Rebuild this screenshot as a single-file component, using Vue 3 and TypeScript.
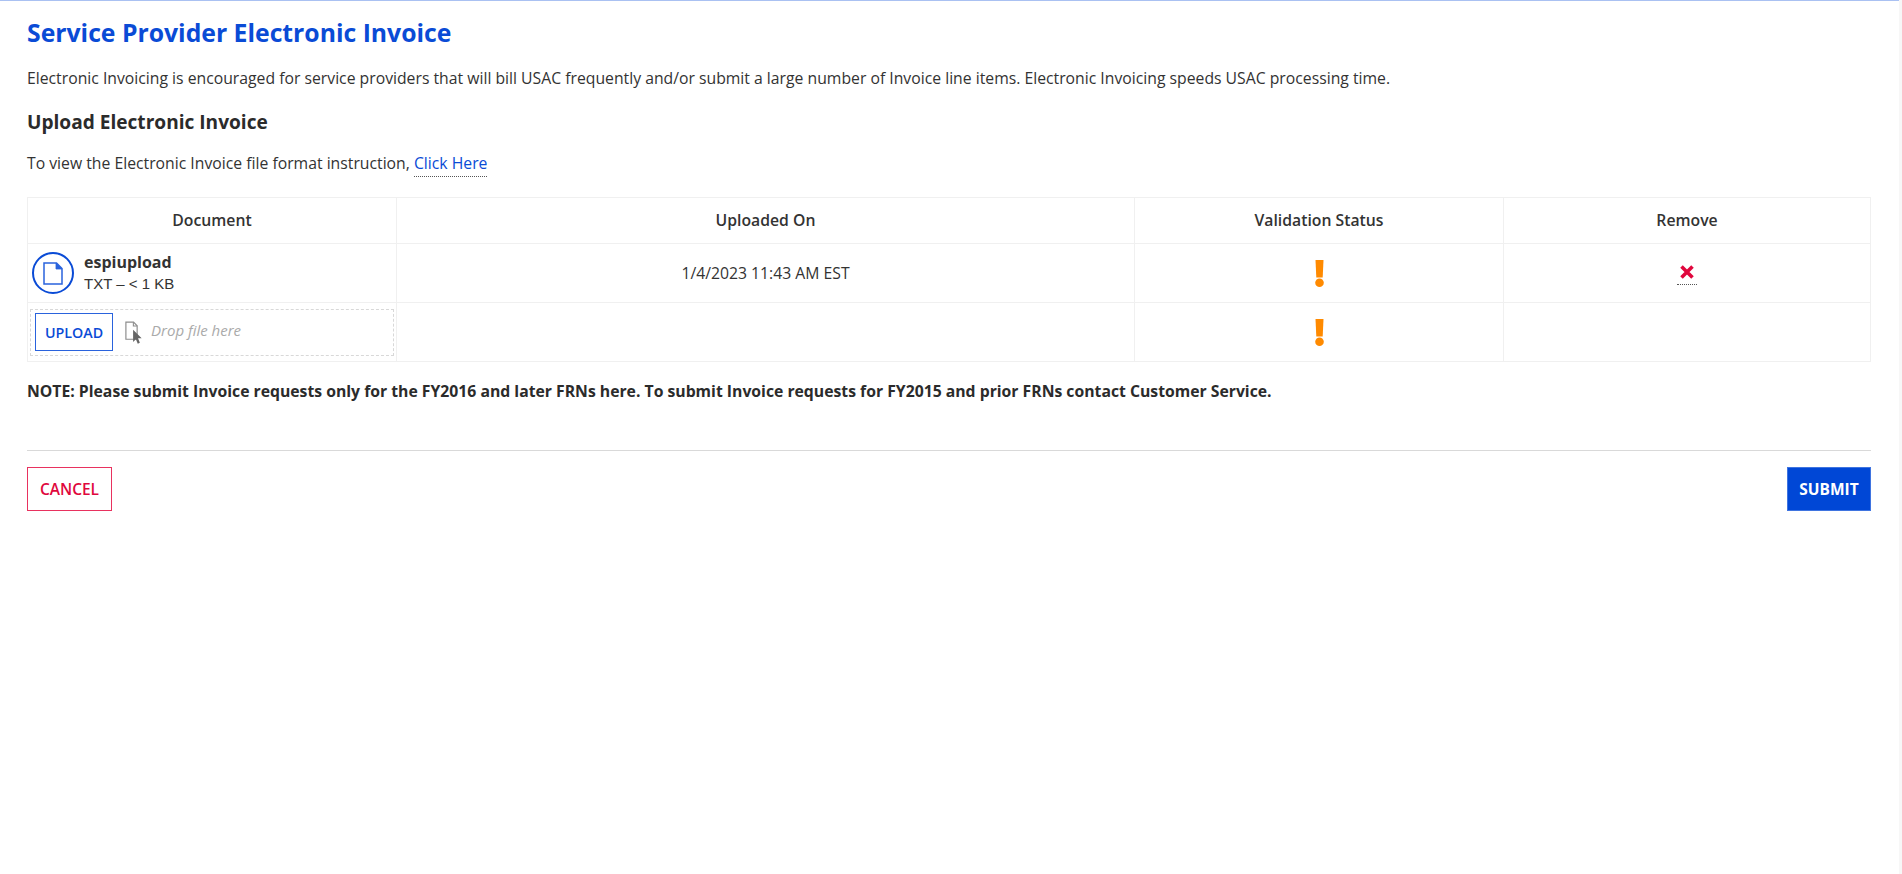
<template>
  <div class="page">
    <main class="content">
      <h1>Service Provider Electronic Invoice</h1>
      <p class="intro">
        Electronic Invoicing is encouraged for service providers that will bill USAC frequently and/or submit a large number of Invoice line items. Electronic Invoicing speeds USAC processing time.
      </p>
      <h2>Upload Electronic Invoice</h2>
      <p class="format">
        To view the Electronic Invoice file format instruction,
        <a class="dotted" href="#">Click Here</a>
      </p>

      <table class="docs">
        <thead>
          <tr>
            <th v-for="col in columns" :key="col">{{ col }}</th>
          </tr>
        </thead>
        <tbody>
          <tr class="row-file">
            <td>
              <div class="file">
                <span class="file-icon">
                  <svg width="20" height="23" viewBox="0 0 20 23" fill="none" stroke="#2a63dd" stroke-width="1.500">
                    <path d="M1 1h12.500L19 6.500V22H1z" />
                    <path d="M13 1l6 6h-6z" fill="#2a63dd" stroke-width="0.800" />
                  </svg>
                </span>
                <div class="file-info">
                  <strong>espiupload</strong>
                  <span>TXT – &lt; 1 KB</span>
                </div>
              </div>
            </td>
            <td class="center">1/4/2023 11:43 AM EST</td>
            <td class="center">
              <svg class="warn" width="9" height="27" viewBox="0 0 9 27" fill="#ff8a00">
                <path d="M.5 0h8l-.8 17.500H1.300z" />
                <circle cx="4.500" cy="22.700" r="4.300" />
              </svg>
            </td>
            <td class="center">
              <a class="remove" href="#" aria-label="Remove">
                <svg width="14" height="14" viewBox="0 0 14 14" stroke="#e0073d" stroke-width="3.600">
                  <path d="M1.500 1.500l11 11M12.500 1.500l-11 11" />
                </svg>
              </a>
            </td>
          </tr>
          <tr class="row-upload">
            <td class="drop-cell">
              <div class="drop">
                <button class="btn-upload" type="button">UPLOAD</button>
                <svg class="drop-icon" width="18" height="23" viewBox="0 0 20 25">
                  <path d="M1 1h8.500l4 4v15H1z" fill="#fff" stroke="#8c8c8c" stroke-width="1.300" />
                  <path d="M9.300 1v4.300h4.200" fill="none" stroke="#8c8c8c" stroke-width="1.200" />
                  <path d="M9 9.500l9.500 9.500h-4l2 5-2.300 1-2.100-5-3.100 3z" fill="#666" />
                </svg>
                <em>Drop file here</em>
              </div>
            </td>
            <td></td>
            <td class="center">
              <svg class="warn" width="9" height="27" viewBox="0 0 9 27" fill="#ff8a00">
                <path d="M.5 0h8l-.8 17.500H1.300z" />
                <circle cx="4.500" cy="22.700" r="4.300" />
              </svg>
            </td>
            <td></td>
          </tr>
        </tbody>
      </table>

      <p class="note">
        NOTE: Please submit Invoice requests only for the FY2016 and later FRNs here. To submit Invoice requests for FY2015 and prior FRNs contact Customer Service.
      </p>

      <div class="actions">
        <button class="btn-cancel" type="button">CANCEL</button>
        <button class="btn-submit" type="button">SUBMIT</button>
      </div>
    </main>
  </div>
</template>

<script setup lang="ts">
const columns: string[] = ['Document', 'Uploaded On', 'Validation Status', 'Remove']
</script>

<style>
html, body {
  margin: 0;
  background: #fff;
}
</style>

<style scoped>
.page {
  min-height: 874px;
  box-sizing: border-box;
  border-right: 3px solid #f7f7f7;
  font-family: "Open Sans", "Noto Sans", sans-serif;
  font-size: 15.75px;
  color: #333;
}
.content {
  padding: 0 28px 0 27px;
  border-top: 1px solid #aac1f2;
}
h1 {
  margin: 0;
  padding-top: 15px;
  font-size: 24.75px;
  line-height: 33px;
  font-weight: 700;
  color: #0a4bd6;
}
.intro {
  margin: 20px 0 0;
  line-height: 19px;
}
h2 {
  margin: 22px 0 0;
  font-size: 19.1px;
  line-height: 24px;
  font-weight: 700;
  color: #2b2b2b;
}
.format {
  margin: 20px 0 0;
  line-height: 19px;
}
a {
  color: #0a4bd6;
  text-decoration: none;
}
.dotted {
  border-bottom: 1px dotted #555;
  padding-bottom: 2px;
}
.docs {
  width: 100%;
  margin-top: 24px;
  border-collapse: collapse;
  table-layout: fixed;
}
.docs th,
.docs td {
  border: 1px solid #f0f0f0;
  padding: 0;
}
.docs th {
  height: 43px;
  padding-bottom: 2px;
  font-weight: 600;
  color: #333;
}
.docs th:nth-child(1),
.docs th:nth-child(3) {
  width: 368px;
}
.docs th:nth-child(4) {
  width: 366px;
}
.row-file td {
  height: 58px;
}
.row-upload td {
  height: 54px;
}
.center {
  text-align: center;
}
.file {
  display: flex;
  align-items: center;
  gap: 10px;
  padding-left: 4px;
}
.file-icon {
  width: 38px;
  height: 38px;
  border: 2.500px solid #0a4bd6;
  border-radius: 50%;
  display: flex;
  align-items: center;
  justify-content: center;
  flex-shrink: 0;
}
.file-info {
  display: flex;
  flex-direction: column;
  line-height: 21px;
}
.file-info strong {
  font-size: 16px;
  color: #333;
}
.file-info span {
  font-family: "Liberation Sans", Arial, sans-serif;
  font-size: 15px;
}
.warn {
  display: inline-block;
  vertical-align: middle;
}
.remove {
  display: inline-block;
  line-height: 0;
  padding: 0 3px 5px;
  border-bottom: 1px dotted #555;
}
.docs .drop-cell {
  padding: 2px;
}
.drop {
  display: flex;
  align-items: center;
  box-sizing: border-box;
  height: 47px;
  padding: 0 4px;
  border: 1px dashed #d8d8d8;
}
.drop-icon {
  margin-left: 12px;
  flex-shrink: 0;
}
.drop em {
  margin-left: 8px;
  padding-bottom: 5px;
  font-size: 15px;
  color: #aaa;
}
.btn-upload {
  width: 78px;
  height: 38px;
  padding: 0;
  background: #fff;
  border: 1px solid #2a63dd;
  color: #0a4bd6;
  font: 600 14.25px "Open Sans", sans-serif;
}
.note {
  margin: 20px 0 0;
  line-height: 19px;
  font-weight: 700;
  color: #2b2b2b;
}
.actions {
  display: flex;
  justify-content: space-between;
  align-items: flex-start;
  margin-top: 49px;
  padding-top: 16px;
  border-top: 1px solid #d9d9d9;
}
.btn-cancel,
.btn-submit {
  height: 44px;
  padding: 0;
  font: 600 15.5px "Open Sans", sans-serif;
}
.btn-cancel {
  width: 85px;
  background: #fff;
  border: 1px solid #e8325f;
  color: #e0073d;
}
.btn-submit {
  width: 84px;
  background: #0047d6;
  border: 1px solid #3f74e0;
  color: #fff;
  font-weight: 700;
}
</style>
